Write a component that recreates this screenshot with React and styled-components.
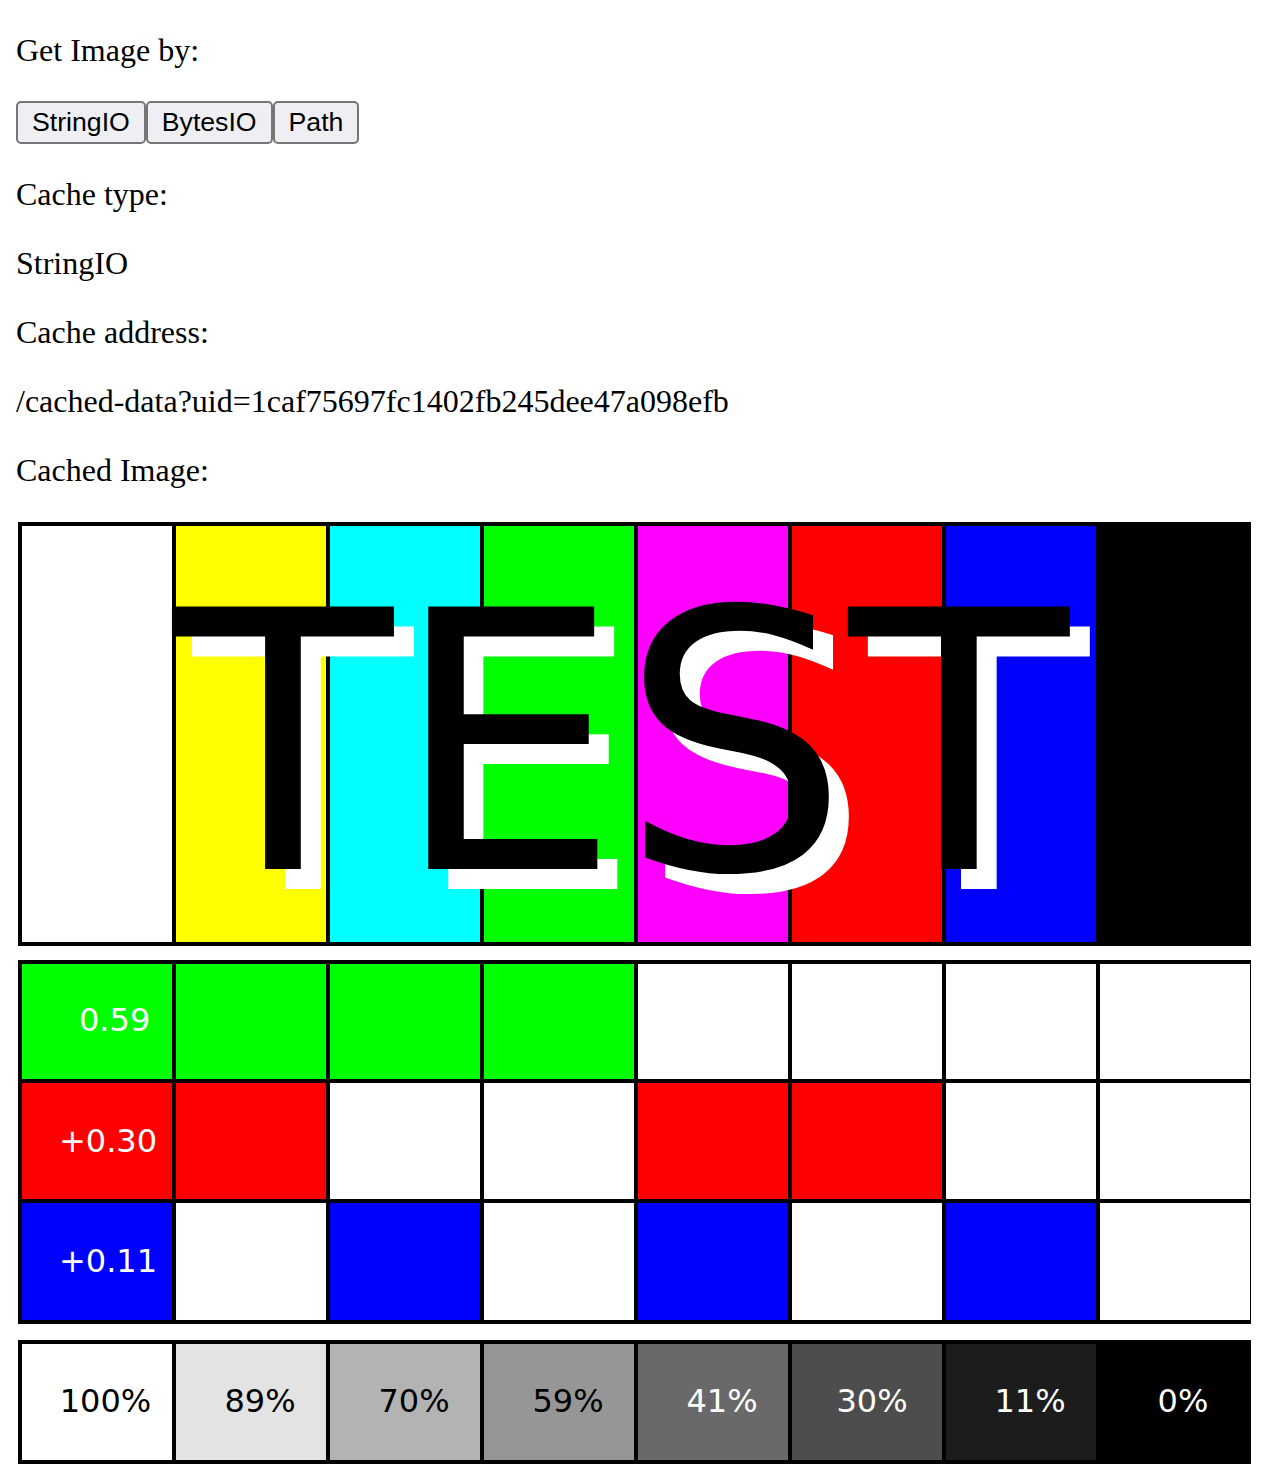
import React from "react";
import styled, { createGlobalStyle } from "styled-components";

const GlobalStyle = createGlobalStyle`
  html, body {
    background: #ffffff;
  }
  body {
    margin: 0 16px;
    font-family: "Liberation Serif", "Times New Roman", serif;
    font-size: 32px;
    color: #000000;
  }
`;

const Page = styled.main`
  display: flow-root;
`;

const Para = styled.p`
  margin: 32px 0;
  font-size: 32px;
  line-height: normal;
`;

const ButtonBar = styled.div`
  display: block;
  font-size: 32px;
`;

const Button = styled.button`
  font-family: "Liberation Sans", Arial, sans-serif;
  font-size: 26.67px;
  line-height: normal;
  color: #000000;
  background: #efeff3;
  border: 2px solid #767676;
  border-radius: 5px;
  padding: 4px 14px;
  margin: 0;
  cursor: pointer;
`;

const TestImage = styled.svg`
  display: block;
  width: 1238px;
  height: 945px;
`;

const X0 = 22;
const PITCH = 154;
const CELL = 150;
const cellX = (i) => X0 + i * PITCH;

const bars = ["#ffffff", "#ffff00", "#00ffff", "#00ff00", "#ff00ff", "#ff0000", "#0000ff", "#000000"];

const rows = [
  { color: "#00ff00", on: [1, 1, 1, 1, 0, 0, 0, 0], y: 963, h: 115, label: "0.59", lx: 79, base: 1030 },
  { color: "#ff0000", on: [1, 1, 0, 0, 1, 1, 0, 0], y: 1082, h: 116, label: "+0.30", lx: 59, base: 1151 },
  { color: "#0000ff", on: [1, 0, 1, 0, 1, 0, 1, 0], y: 1202, h: 117, label: "+0.11", lx: 59, base: 1271 },
];

const grays = [
  { fill: "#ffffff", text: "#000000", label: "100%", cx: 105.5 },
  { fill: "#e3e3e3", text: "#000000", label: "89%", cx: 260 },
  { fill: "#b3b3b3", text: "#000000", label: "70%", cx: 414 },
  { fill: "#969696", text: "#000000", label: "59%", cx: 568 },
  { fill: "#696969", text: "#ffffff", label: "41%", cx: 722 },
  { fill: "#4d4d4d", text: "#ffffff", label: "30%", cx: 872 },
  { fill: "#1c1c1c", text: "#ffffff", label: "11%", cx: 1030 },
  { fill: "#000000", text: "#ffffff", label: "0%", cx: 1183 },
];

const SANS = '"DejaVu Sans", Verdana, sans-serif';

function TestPattern() {
  return (
    <TestImage viewBox="16 520 1238 945" xmlns="http://www.w3.org/2000/svg">
      {/* colour bars */}
      <rect x="18" y="521" width="1236" height="424" fill="#000" />
      {bars.map((c, i) => (
        <rect key={i} x={cellX(i)} y="525" width={CELL} height="416" fill={c} />
      ))}
      <text x="193" y="888" fontFamily={SANS} fontSize="360" fill="#ffffff">TEST</text>
      <text x="173" y="868" fontFamily={SANS} fontSize="360" fill="#000000">TEST</text>

      {/* luminance weights */}
      <rect x="18" y="959" width="1236" height="364" fill="#000" />
      {rows.map((r, ri) => (
        <g key={ri}>
          {r.on.map((v, i) => (
            <rect key={i} x={cellX(i)} y={r.y} width={CELL} height={r.h} fill={v ? r.color : "#ffffff"} />
          ))}
          <text x={r.lx} y={r.base} fontFamily={SANS} fontSize="32" fill="#ffffff">{r.label}</text>
        </g>
      ))}

      {/* grey scale */}
      <rect x="18" y="1339" width="1236" height="124" fill="#000" />
      {grays.map((g, i) => (
        <g key={i}>
          <rect x={cellX(i)} y="1343" width={CELL} height="116" fill={g.fill} />
          <text x={g.cx} y="1411" textAnchor="middle" fontFamily={SANS} fontSize="32" fill={g.text}>{g.label}</text>
        </g>
      ))}
    </TestImage>
  );
}

export default function App() {
  return (
    <Page>
      <GlobalStyle />
      <Para>Get Image by:</Para>
      <ButtonBar>
        <Button>StringIO</Button><Button>BytesIO</Button><Button>Path</Button>
      </ButtonBar>
      <Para>Cache type:</Para>
      <Para>StringIO</Para>
      <Para>Cache address:</Para>
      <Para>/cached-data?uid=1caf75697fc1402fb245dee47a098efb</Para>
      <Para>Cached Image:</Para>
      <TestPattern />
    </Page>
  );
}
